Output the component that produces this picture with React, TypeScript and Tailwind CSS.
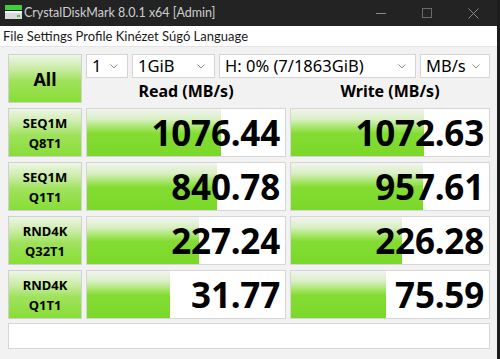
import React from "react";

const font = { fontFamily: '"Noto Sans", "Open Sans", sans-serif' };

const rows = [
  { l1: "SEQ1M", l2: "Q8T1", r: "1076.44", rw: 134, w: "1072.63", ww: 133 },
  { l1: "SEQ1M", l2: "Q1T1", r: "840.78", rw: 130, w: "957.61", ww: 132 },
  { l1: "RND4K", l2: "Q32T1", r: "227.24", rw: 112, w: "226.28", ww: 111 },
  { l1: "RND4K", l2: "Q1T1", r: "31.77", rw: 83, w: "75.59", ww: 95 },
];

function Chevron() {
  return (
    <svg width="8" height="5" viewBox="0 0 8 5" className="shrink-0">
      <path d="M0.5 0.5 L4 4 L7.5 0.5" fill="none" stroke="#8a8a8a" strokeWidth="1" />
    </svg>
  );
}

function Drop({ text, w }: { text: string; w: string }) {
  return (
    <div className={`${w} h-[24px] bg-white border border-[#d4d4d4] flex items-center justify-between pl-[5px] pr-[9px]`}>
      <span className="text-[16.5px] leading-none text-black">{text}</span>
      <Chevron />
    </div>
  );
}

function Cell({ value, bar }: { value: string; bar: number }) {
  return (
    <div className="relative h-[49px] bg-white border border-[#d6d6d6] flex items-center justify-end pr-[5px] overflow-hidden">
      <div
        className="absolute left-0 top-0 bottom-0 bg-[linear-gradient(to_bottom,#f2f4f0_0%,#d8efc3_22%,#a4e565_40%,#84dc33_52%,#7ad829_100%)]"
        style={{ width: bar }}
      />
      <span className="relative text-[35px] font-bold leading-none text-black tracking-[-0.2px]">{value}</span>
    </div>
  );
}

export default function App() {
  return (
    <div className="w-[500px] h-[359px] bg-[#1c1c1c] flex overflow-hidden" style={font}>
      <div className="w-[497px] h-full flex flex-col bg-[#f2f2f2]">
        {/* title bar */}
        <div className="h-[26px] bg-[#232323] flex items-center shrink-0">
          <svg width="18" height="16" viewBox="0 0 18 16" className="ml-[5px] mr-[1px]">
            <rect x="0" y="0" width="17" height="5" fill="#3fcf3a" />
            <rect x="0" y="6" width="17" height="8" fill="#d9d9d9" />
            <rect x="0" y="6" width="17" height="2" fill="#f2f2f2" />
            <rect x="12" y="10" width="3" height="2" fill="#3fcf3a" />
          </svg>
          <span className="text-[12.5px] text-[#cfcfcf] leading-none font-['Lato',sans-serif]">CrystalDiskMark 8.0.1 x64 [Admin]</span>
          <div className="flex-1" />
          <div className="w-[46px] flex justify-center">
            <div className="w-[10px] h-[1px] bg-[#8a8a8a]" />
          </div>
          <div className="w-[46px] flex justify-center">
            <div className="w-[10px] h-[10px] border border-[#6a6a6a]" />
          </div>
          <div className="w-[46px] flex justify-center mr-[1px]">
            <svg width="11" height="11" viewBox="0 0 11 11">
              <path d="M0.5 0.5 L10.5 10.5 M10.5 0.5 L0.5 10.5" stroke="#8a8a8a" strokeWidth="1" />
            </svg>
          </div>
        </div>
        {/* menu */}
        <div className="h-[21px] bg-white flex items-center pl-[3px] border-b border-[#e4e4e4] shrink-0 text-[13px] text-[#1a1a1a] leading-none font-['Lato',sans-serif] whitespace-pre">
          <span>File Settings Profile Kinézet Súgó Language</span>
        </div>
        {/* content */}
        <div className="flex flex-col pl-[8px] pt-[7px] gap-[5px]">
          <div className="flex gap-[4px] h-[49px]">
            <div className="w-[74px] h-[49px] border border-[#d0d0d0] bg-[linear-gradient(to_bottom,#eef6e6_0%,#c9eca4_30%,#9fe25c_55%,#88dd36_100%)] flex items-center justify-center">
              <span className="text-[18px] font-bold text-black leading-none">All</span>
            </div>
            <div className="flex flex-col w-[404px]">
              <div className="flex gap-[4px]">
                <Drop text="1" w="w-[42px]" />
                <Drop text="1GiB" w="w-[83px]" />
                <Drop text="H: 0% (7/1863GiB)" w="w-[197px]" />
                <Drop text="MB/s" w="w-[70px]" />
              </div>
              <div className="flex flex-1 gap-[4px] items-center">
                <div className="w-[200px] text-center text-[16px] font-bold text-black leading-none pt-[1px]">Read (MB/s)</div>
                <div className="w-[200px] text-center text-[16px] font-bold text-black leading-none pt-[1px]">Write (MB/s)</div>
              </div>
            </div>
          </div>
          {rows.map((r) => (
            <div key={r.l1 + r.l2} className="grid grid-cols-[74px_200px_200px] gap-x-[4px]">
              <div className="h-[49px] border border-[#d0d0d0] bg-[linear-gradient(to_bottom,#eef6e6_0%,#c9eca4_30%,#9fe25c_55%,#88dd36_100%)] flex flex-col items-center justify-center">
                <span className="text-[13px] font-bold text-black leading-[20px]">{r.l1}</span>
                <span className="text-[13px] font-bold text-black leading-[20px]">{r.l2}</span>
              </div>
              <Cell value={r.r} bar={r.rw} />
              <Cell value={r.w} bar={r.ww} />
            </div>
          ))}
          <div className="w-[482px] h-[26px] bg-white border border-[#d6d6d6] -mt-[1px]" />
        </div>
      </div>
    </div>
  );
}
